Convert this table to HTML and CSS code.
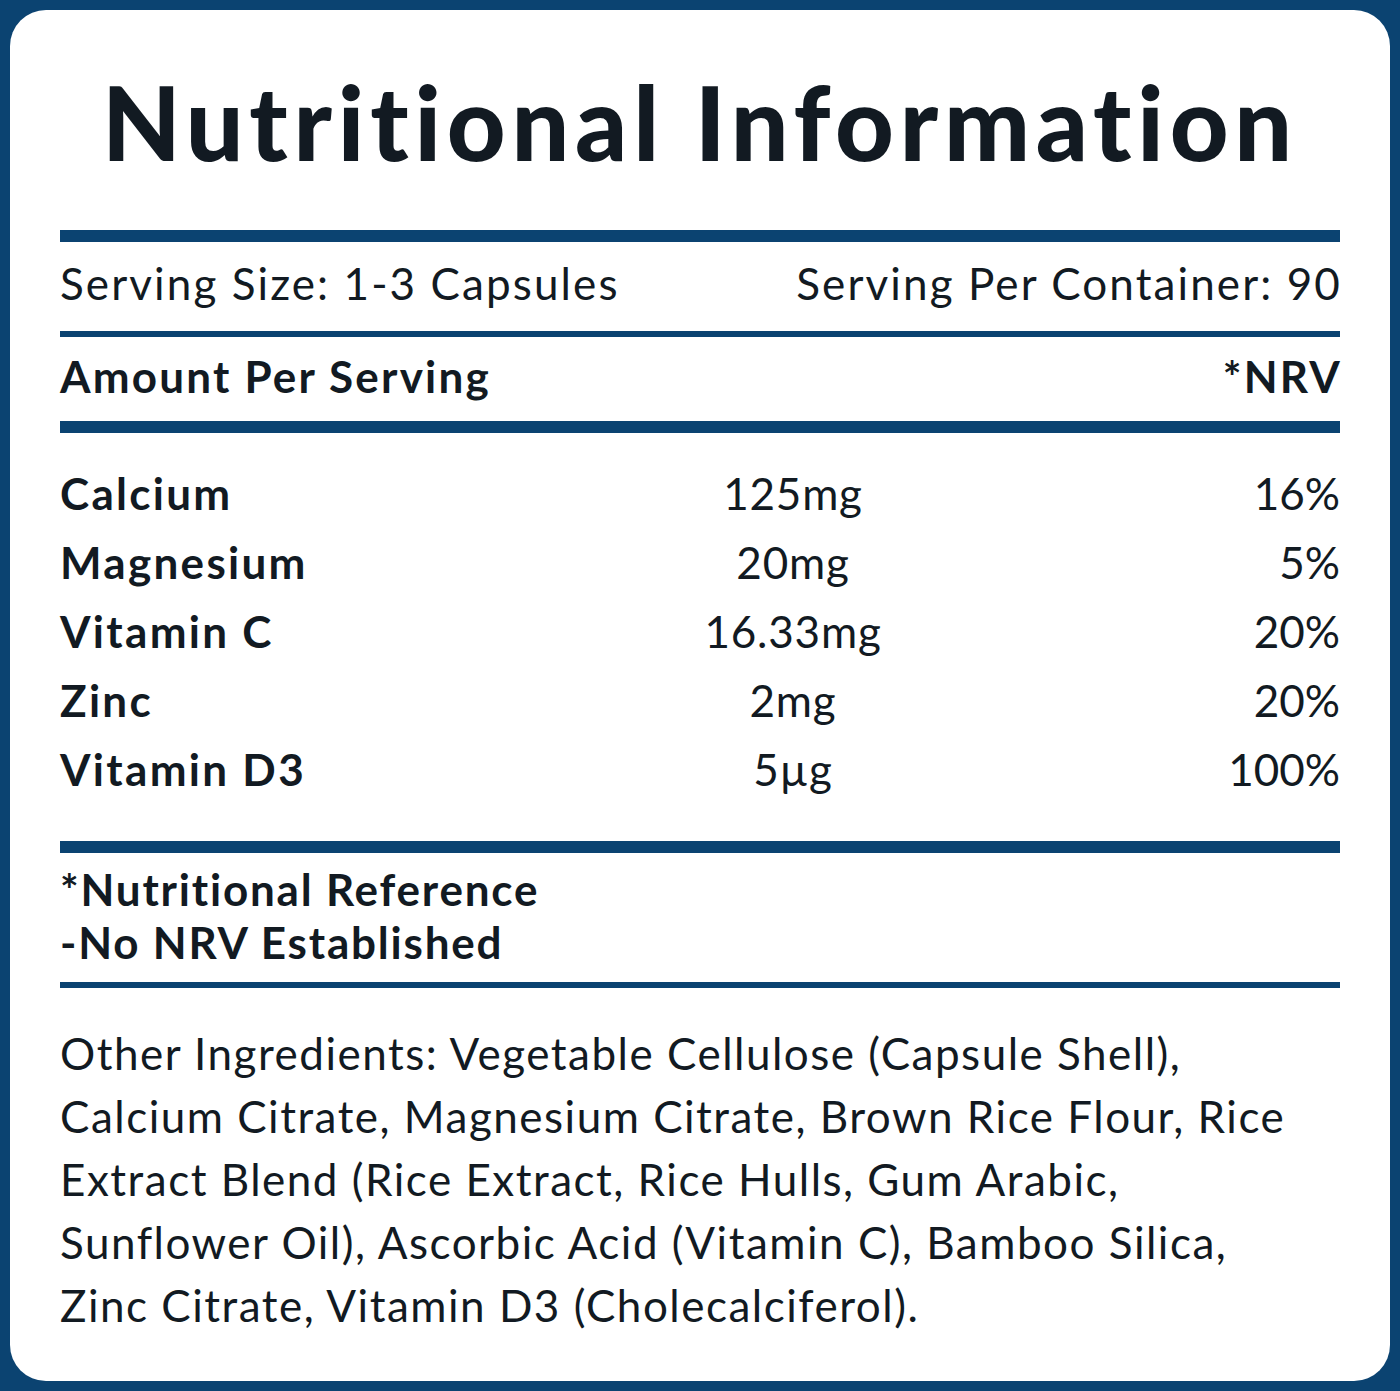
FILE: index.html
```html
<!DOCTYPE html>
<html lang="en">
<head>
<meta charset="utf-8">
<title>Nutritional Information</title>
<link rel="stylesheet" href="styles.css">
</head>
<body>
<div class="card">
  <h1 class="title">Nutritional Information</h1>
  <div class="rule thick rule-1"></div>
  <div class="serving">
    <span>Serving Size: 1-3 Capsules</span>
    <span>Serving Per Container: 90</span>
  </div>
  <div class="rule thin rule-2"></div>
  <div class="amount">
    <span>Amount Per Serving</span>
    <span>*NRV</span>
  </div>
  <div class="rule thick rule-3"></div>
  <div class="nutrients">
    <span class="name">Calcium</span><span class="val">125mg</span><span class="pct">16%</span>
    <span class="name">Magnesium</span><span class="val">20mg</span><span class="pct">5%</span>
    <span class="name">Vitamin C</span><span class="val">16.33mg</span><span class="pct">20%</span>
    <span class="name">Zinc</span><span class="val">2mg</span><span class="pct">20%</span>
    <span class="name">Vitamin D3</span><span class="val">5µg</span><span class="pct">100%</span>
  </div>
  <div class="rule thick rule-4"></div>
  <div class="notes">
    <div>*Nutritional Reference</div>
    <div>-No NRV Established</div>
  </div>
  <div class="rule thin rule-5"></div>
  <p class="ingredients">Other Ingredients: Vegetable Cellulose (Capsule Shell),<br>Calcium Citrate, Magnesium Citrate, Brown Rice Flour, Rice<br>Extract Blend (Rice Extract, Rice Hulls, Gum Arabic,<br>Sunflower Oil), Ascorbic Acid (Vitamin C), Bamboo Silica,<br>Zinc Citrate, Vitamin D3 (Cholecalciferol).</p>
</div>
</body>
</html>
```

FILE: styles.css
```css
html, body {
  margin: 0;
  padding: 0;
}
body {
  background: #0b4371;
  font-family: "Lato", "Liberation Sans", sans-serif;
  color: #121a22;
  font-variant-ligatures: none;
}
.card {
  margin: 10px;
  height: 1371px;
  box-sizing: border-box;
  background: #ffffff;
  border-radius: 36px;
  padding: 52px 50px 0;
}
.title {
  margin: 0;
  font-size: 102px;
  line-height: 120px;
  font-weight: 900;
  text-align: center;
  letter-spacing: 5.8px;
}
.rule {
  background: #0b4371;
}
.thick { height: 12px; }
.thin { height: 6px; }
.rule-1 { margin-top: 48px; }
.serving {
  margin-top: 11px;
  display: flex;
  justify-content: space-between;
  font-size: 44px;
  line-height: 60px;
  letter-spacing: 2.1px;
}
.serving span:last-child { margin-right: -2px; }
.rule-2 { margin-top: 18px; }
.amount {
  margin-top: 9px;
  display: flex;
  justify-content: space-between;
  font-size: 44px;
  line-height: 60px;
  font-weight: 700;
  letter-spacing: 2.2px;
}
.amount span:last-child { margin-right: -2px; }
.rule-3 { margin-top: 15px; }
.nutrients {
  margin-top: 26px;
  display: grid;
  grid-template-columns: 583px 300px 1fr;
  font-size: 44px;
  line-height: 69px;
}
.name { font-weight: 700; letter-spacing: 2.3px; }
.val { text-align: center; letter-spacing: 0.8px; }
.pct { text-align: right; }
.rule-4 { margin-top: 37px; }
.notes {
  margin-top: 10px;
  font-size: 44px;
  line-height: 53px;
  font-weight: 700;
  letter-spacing: 1.8px;
}
.rule-5 { margin-top: 13px; }
.ingredients {
  margin: 34px 0 0;
  font-size: 44px;
  line-height: 63px;
  letter-spacing: 1.5px;
}
```
